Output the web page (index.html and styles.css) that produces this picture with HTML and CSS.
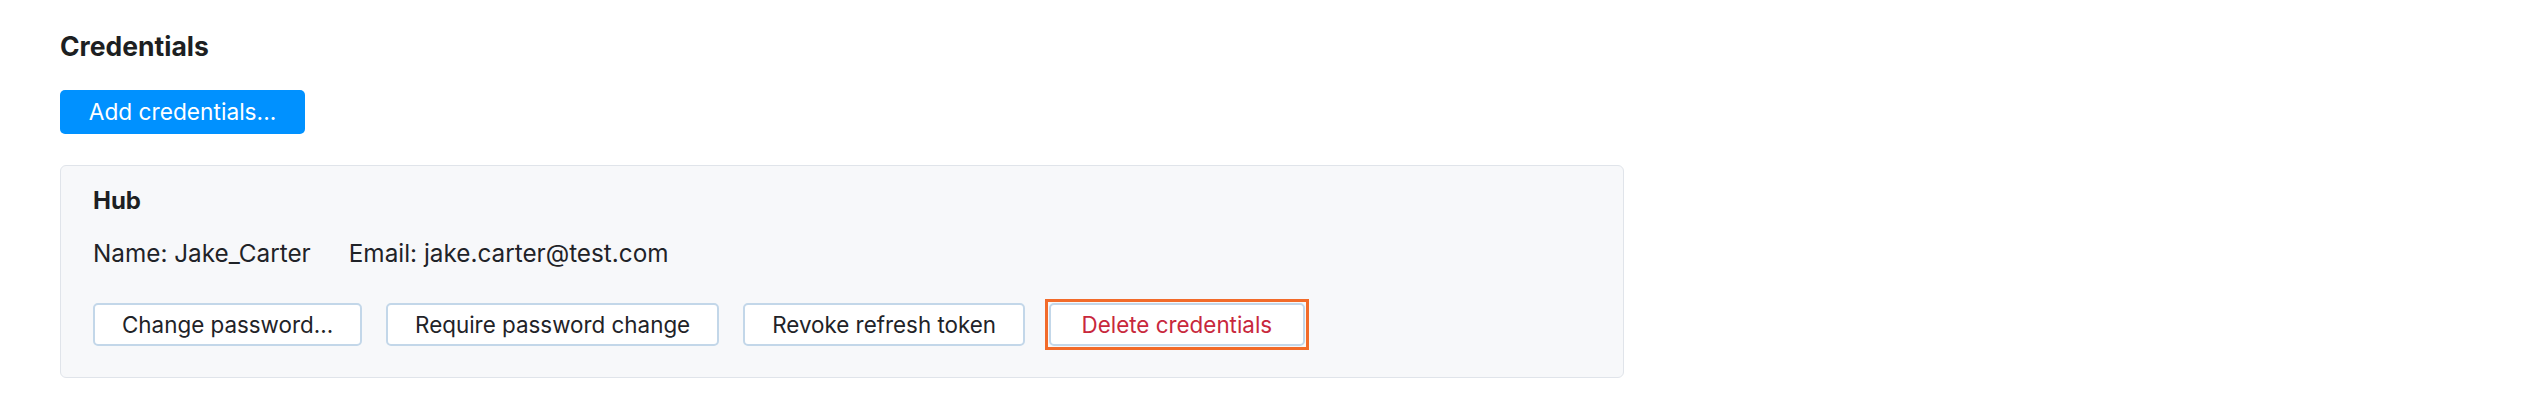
FILE: index.html
```html
<!DOCTYPE html>
<html lang="en">
<head>
<meta charset="utf-8">
<title>Credentials</title>
<link rel="stylesheet" href="styles.css">
</head>
<body>
<main class="page">
  <h2 class="title">Credentials</h2>
  <button class="btn-primary" type="button">Add credentials...</button>
  <section class="card">
    <h3 class="card-title">Hub</h3>
    <div class="meta">
      <span>Name: Jake_Carter</span>
      <span>Email: jake.carter@test.com</span>
    </div>
    <div class="actions">
      <button class="btn" type="button">Change password...</button>
      <button class="btn" type="button">Require password change</button>
      <button class="btn" type="button">Revoke refresh token</button>
      <button class="btn btn-danger" type="button">Delete credentials</button>
    </div>
  </section>
</main>
</body>
</html>
```
FILE: styles.css
```css
* { box-sizing: border-box; }
html, body { margin: 0; padding: 0; background: #ffffff; }
body {
  font-family: Inter, "Noto Sans", "Liberation Sans", sans-serif;
  font-size: 22.4px;
  color: #1f2328;
}
.page {
  padding: 30px 0 0 60px;
  display: flex;
  flex-direction: column;
  align-items: flex-start;
}
.title {
  margin: 0;
  font-size: 26.5px;
  line-height: 32px;
  font-weight: 700;
  color: #1d1f22;
}
.btn-primary {
  margin-top: 28px;
  height: 44px;
  width: 245px;
  padding: 0;
  border: none;
  border-radius: 5px;
  background: #0091ff;
  color: #ffffff;
  font: inherit;
  font-size: 22.7px;
  line-height: 44px;
}
.card {
  margin-top: 31px;
  width: 1564px;
  background: #f7f8fa;
  border: 1px solid #e0e4ea;
  border-radius: 6px;
  padding: 20px 32px 31px;
}
.card-title {
  margin: 0;
  font-size: 24px;
  line-height: 30px;
  font-weight: 700;
  color: #1d1f22;
}
.meta {
  margin-top: 22px;
  font-size: 24.3px;
  line-height: 30px;
  display: flex;
  gap: 38px;
}
.actions {
  margin-top: 35px;
  display: flex;
  gap: 24px;
}
.btn {
  height: 43px;
  padding: 0 27px;
  background: #ffffff;
  border: 2px solid #c3d7e9;
  border-radius: 5px;
  font: inherit;
  color: #1f2328;
  line-height: 39px;
}
.btn-danger {
  position: relative;
  padding: 0 30.5px;
  color: #c8283c;
}
.btn-danger::after {
  content: "";
  position: absolute;
  inset: -6px;
  border: 3px solid #f26b2a;
}
```
